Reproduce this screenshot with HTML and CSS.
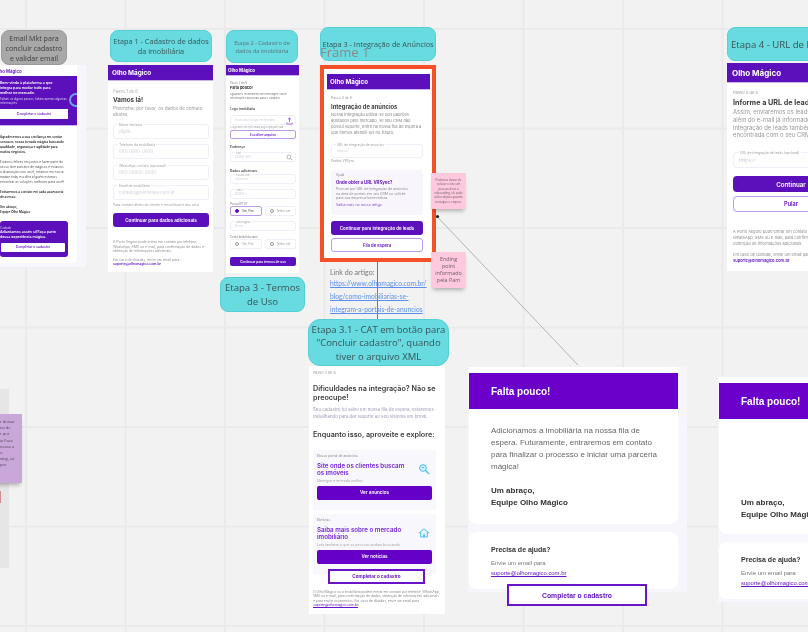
FILE: index.html
```html
<!DOCTYPE html>
<html lang="pt-BR">
<head>
<meta charset="utf-8">
<title>Fluxo de cadastro</title>
<link rel="stylesheet" href="styles.css">
</head>
<body>
<main class="board">

<div class="sliver"></div>
<div class="sliver-red"></div>
<div class="note note-lilac">r deixar<br>na de<br>r por<br>ia Fase<br>nesse a<br>o<br>ving, só<br>por</div>

<svg class="wires" width="808" height="632" viewBox="0 0 808 632">
  <path d="M437.5 217 L578 365" stroke="#b4b4b4" stroke-width="1" fill="none"/>
  <path d="M377.5 259 V320" stroke="#7a7a7a" stroke-width="1" fill="none"/>
  <circle cx="437.5" cy="216.5" r="1.6" fill="#222"/>
  <circle cx="377.5" cy="259" r="1.6" fill="#222"/>
</svg>

<div class="tag tag-gray t-mkt">Email Mkt para<br>concluir cadastro<br>e validar email</div>
<div class="tag t-e1">Etapa 1 - Cadastro de dados<br>da imobiliária</div>
<div class="tag t-e2">Etapa 2 - Cadastro de<br>dados da imobiliária</div>
<div class="tag t-e3">Etapa 3 - Integração de Anúncios</div>
<div class="tag t-terms">Etapa 3 - Termos<br>de Uso</div>
<div class="tag t-e31">Etapa 3.1 - CAT em botão para<br>"Concluir cadastro", quando<br>tiver o arquivo XML</div>
<div class="tag t-e4">Etapa 4 - URL de leads</div>
<div class="frame-name">Frame 1</div>

<!-- E-mail marketing -->
<section class="s-mail">
  <div class="mail-inner">
    <div class="mail-logo">Olho Mágico</div>
    <div class="mail-hero">
      <b>Bem-vindo à plataforma a que<br>integra para mudar tudo para<br>melhor no mercado.</b>
      <span>Faltam só alguns passos, faltam apenas algumas<br>informações.</span>
      <div class="mail-btn">Completar o cadastro</div>
      <i class="ring"></i>
    </div>
    <div class="mail-body">
      <p><b>Agradecemos a sua confiança em contar<br>conosco; nossa jornada mágica buscando<br>qualidade, segurança e agilidade para<br>muitos negócios.</b></p>
      <p>Estamos felizes em juntos e fazer parte do<br>nosso time parceiro de mágicos e estamos<br>a disposição com você, estamos em nossa<br>equipe toda, escolha a lguém estamos<br>encontrar as soluções melhores para você!</p>
      <p><b>Entraremos a contato em cada assessoria<br>de acesso.</b></p>
      <p class="mail-sign"><b>Um abraço,<br>Equipe Olho Mágico</b></p>
    </div>
    <div class="mail-card">
      <span>Cuidado</span>
      <b>Adiantamos assim sil Faça parte<br>dessa experiência mágica.</b>
      <div class="mail-btn">Completar o cadastro</div>
    </div>
  </div>
</section>

<!-- Etapa 1 -->
<section class="screen s1">
  <header class="bar bar-1">Olho Mágico</header>
  <div class="pad-1">
    <div class="step">Passo 1 de 6</div>
    <h2 class="h-1">Vamos lá!</h2>
    <p class="lead-1">Preencha, por favor, os dados de contato<br>abaixo.</p>
    <div class="field f-1"><label>Nome fantasia</label><span>digite</span></div>
    <div class="field f-1"><label>Telefone da imobiliária</label><span>(00) 0000-0000</span></div>
    <div class="field f-1"><label>WhatsApp contato (opcional)</label><span>(00) 00000-0000</span></div>
    <div class="field f-1"><label>Email da imobiliária</label><span>contato@minhasua.com.br</span></div>
    <div class="hint-1">Para contato direto do cliente e envio/inserir dos seus</div>
    <div class="btn btn-1">Continuar para dados adicionais</div>
    <p class="legal-1">A Porto Seguro pode entrar em contato por telefone,<br>WhatsApp, SMS ou e-mail, para confirmação de dados e<br>obtenção de informações adicionais.</p>
    <p class="legal-1 gap-1">Em caso de dúvidas, envie um email para<br><a>suporte@olhomagico.com.br</a></p>
  </div>
</section>

<!-- Etapa 2 -->
<section class="screen s2">
  <header class="bar bar-2">Olho Mágico</header>
  <div class="pad-2">
    <div class="step step-2">Passo 2 de 6</div>
    <h3 class="h-2">Falta pouco!</h3>
    <p class="lead-2">Aguarde o recebimento de mensagem sobre<br>informações adicionais para o cadastro.</p>
    <div class="sec-2">Logo imobiliária</div>
    <div class="field f-2 f-upload"><span>Insira aqui a logo em formato</span>
      <svg class="ico-up" width="7" height="8" viewBox="0 0 7 8"><path d="M3.5 5V1M2 2.4 3.5 1 5 2.4M.8 5.5v1.5h5.4V5.5" stroke="#8a4fe0" stroke-width=".8" fill="none"/></svg>
    </div>
    <div class="hint-2">A logo deve ser em formato png ou jpeg até 5Mb</div>
    <div class="btn-o o-2">Escolher arquivo</div>
    <div class="sec-2 s2-addr">Endereço</div>
    <div class="field f-2 f-cep"><label>CEP</label><span>00000-000</span>
      <svg class="ico-up" width="7" height="7" viewBox="0 0 7 7"><circle cx="3" cy="3" r="2" stroke="#999" stroke-width=".7" fill="none"/><path d="M4.5 4.5 6.3 6.3" stroke="#999" stroke-width=".7"/></svg>
    </div>
    <div class="sec-2 s2-data">Dados adicionais</div>
    <div class="field f-2 f-sel"><label>Possui site?</label><span>Selecione</span></div>
    <div class="field f-2 f-cre"><label>Creci</label><span>00000-J</span></div>
    <div class="mini-2">Possui IPTU?</div>
    <div class="radios">
      <div class="radio on"><i></i>Sim, Pim</div>
      <div class="radio"><i></i>Tenho site</div>
    </div>
    <div class="field f-2 f-cre"><label>Site/Página</label><span>Nome</span></div>
    <div class="mini-2 m-gap">Conta bola/fiduciário</div>
    <div class="radios">
      <div class="radio"><i></i>Sim, Pim</div>
      <div class="radio"><i></i>Tenho site</div>
    </div>
    <div class="btn btn-2">Continuar para termos de uso</div>
  </div>
</section>

<!-- Etapa 3 -->
<section class="s3">
  <header class="bar bar-3">Olho Mágico</header>
  <div class="pad-3">
    <div class="step">Passo 4 de 6</div>
    <h3 class="h-3">Integração de anúncios</h3>
    <p class="lead-3">Nossa integração utiliza-se dos padrões<br>adotados pelo mercado, se seu CRM não<br>possui suporte, entre na nossa fila de espera a<br>que iremos atendê-los no futuro.</p>
    <div class="field f-3"><label>URL de integração de anúncios</label><span>https://</span></div>
    <div class="hint-3">Padrão VRSync</div>
    <div class="info">
      <small>Ajuda</small>
      <b>Onde obter a URL VRSync?</b>
      <p>Procure por URL de integração de anúncios<br>na área de portais em seu CRM ou solicite<br>para sua empresa fornecedora.</p>
      <a>Saiba mais no nosso artigo</a>
    </div>
    <div class="btn btn-3">Continuar para integração de leads</div>
    <div class="btn-o o-3">Fila de espera</div>
  </div>
</section>

<div class="note note-pink n1">Podemos deixar de colocar o site sim<br>para acelerar o onboarding, ele pode voltar depois quando consegue o arquivo.</div>
<div class="note note-pink n2">Ending point informado pela Pam</div>

<div class="article">
  <p>Link do artigo:</p>
  <a>https://www.olhomagico.com.br/<br>blog/como-imobiliarias-se-<br>integram-a-portais-de-anuncios</a>
</div>

<!-- Etapa 3.1 -->
<section class="s31">
  <div class="step">Passo 4 de 6</div>
  <h3 class="h-31 m1">Dificuldades na integração? Não se preocupe!</h3>
  <p class="lead-31">Seu cadastro foi salvo em nossa fila de espera, estaremos trabalhando para dar suporte ao seu sistema em breve.</p>
  <h3 class="h-31 m2">Enquanto isso, aproveite e explore:</h3>
  <div class="promo">
    <small>Nosso portal de anúncios</small>
    <div class="promo-row">
      <strong>Site onde os clientes buscam os imóveis</strong>
      <svg width="12" height="12" viewBox="0 0 12 12"><circle cx="5" cy="5" r="3.4" fill="#cdefff" stroke="#55bdf0" stroke-width="1"/><path d="M7.6 7.6 11 11" stroke="#55bdf0" stroke-width="1.4"/><path d="M5 3.4 6.6 5H3.4Z" fill="#55bdf0"/></svg>
    </div>
    <small class="sub">Navegue e entenda melhor</small>
    <div class="btn btn-31">Ver anúncios</div>
  </div>
  <div class="promo">
    <small>Notícias</small>
    <div class="promo-row">
      <strong>Saiba mais sobre o mercado imobiliário</strong>
      <svg width="12" height="12" viewBox="0 0 12 12"><path d="M1 6 6 1.8 11 6M2.6 5.2V10h6.8V5.2" fill="#dff4ff" stroke="#55bdf0" stroke-width="1"/><path d="M5 10V7.5h2V10" fill="#55bdf0"/></svg>
    </div>
    <small class="sub">Leia também o que as pessoas andam buscando</small>
    <div class="btn btn-31">Ver notícias</div>
  </div>
  <p class="legal-31">O Olho Mágico ou a imobiliária podem entrar em contato por telefone, WhatsApp, SMS ou e-mail, para confirmação de dados, obtenção de informações adicionais e para enviar orçamentos. Em caso de dúvidas, envie um email para <a>suporte@olhomagico.com.br</a>.</p>
</section>
<div class="cta cta-31">Completar o cadastro</div>

<!-- Falta pouco -->
<section class="wait w1">
  <div class="wait-card">
    <header class="wait-head">Falta pouco!</header>
    <p class="wait-text">Adicionamos a imobiliária na nossa fila de espera. Futuramente, entraremos em contato para finalizar o processo e iniciar uma parceria mágica!</p>
    <p class="wait-sign">Um abraço,<br>Equipe Olho Mágico</p>
  </div>
  <div class="help">
    <b>Precisa de ajuda?</b>
    <span>Envie um email para</span>
    <a>suporte@olhomagico.com.br</a>
  </div>
</section>
<div class="cta cta-w">Completar o cadastro</div>

<section class="wait w2">
  <div class="wait-card">
    <header class="wait-head">Falta pouco!</header>
    <p class="wait-text ghost">&nbsp;</p>
    <p class="wait-sign">Um abraço,<br>Equipe Olho Mágico</p>
  </div>
  <div class="help">
    <b>Precisa de ajuda?</b>
    <span>Envie um email para</span>
    <a>suporte@olhomagico.com.br</a>
  </div>
</section>

<!-- Etapa 4 -->
<section class="screen s4">
  <header class="bar bar-4">Olho Mágico</header>
  <div class="pad-4">
    <div class="step">Passo 5 de 6</div>
    <h3 class="h-4">Informe a URL de leads</h3>
    <p class="lead-4">Assim, enviaremos os leads para o seu CRM<br>além do e-mail já informado. Caso a<br>integração de leads também não seja<br>encontrada com o seu CRM.</p>
    <div class="field f-4"><label>URL de integração de leads (opcional)</label><span>https://</span></div>
    <div class="btn btn-4">Continuar</div>
    <div class="btn-o o-4">Pular</div>
    <p class="legal-4">A Porto Seguro pode entrar em contato por telefone,<br>WhatsApp, SMS ou e-mail, para confirmação de dados,<br>obtenção de informações adicionais.</p>
    <p class="legal-4 gap-4">Em caso de dúvidas, envie um email para<br><a>suporte@olhomagico.com.br</a></p>
  </div>
</section>

</main>
</body>
</html>
```

FILE: styles.css
```css
* { box-sizing: border-box; }
html, body { margin: 0; padding: 0; }
body { overflow: hidden; }
p, h2, h3 { margin: 0; font-weight: inherit; }

.board {
  position: relative;
  width: 808px;
  height: 632px;
  overflow: hidden;
  background-color: #f2f2f2;
  background-image:
    linear-gradient(90deg, #eaeaea 2px, transparent 2px),
    linear-gradient(#eaeaea 2px, transparent 2px);
  background-size: 99.5px 99.5px;
  background-position: 25px 28px;
  font-family: "Inter", "Liberation Sans", sans-serif;
  color: #444;
}

.wires { position: absolute; left: 0; top: 0; }

/* Labels on the canvas */
.tag {
  position: absolute;
  display: flex;
  align-items: center;
  justify-content: center;
  text-align: center;
  background: #68dbe0;
  border: 1px solid #53cfd6;
  border-radius: 8px;
  font-family: "Open Sans", "Liberation Sans", sans-serif;
  color: #37545a;
  white-space: nowrap;
  filter: blur(.3px);
}
.tag-gray { background: #a8a8a8; border-color: #9a9a9a; color: #3c3c3c; }
.t-mkt { left: 1px; top: 30px; width: 66px; height: 35px; font-size: 7.1px; line-height: 10px; }
.t-e1 { left: 110px; top: 30px; width: 102px; height: 32px; font-size: 7.3px; line-height: 10px; }
.t-e2 { left: 226px; top: 30px; width: 72px; height: 33px; font-size: 5.6px; line-height: 8px; color: #5a7479; }
.t-e3 { left: 320px; top: 27px; width: 116px; height: 34px; font-size: 7.3px; padding-bottom: 1px; }
.t-terms { left: 220px; top: 277px; width: 85px; height: 35px; font-size: 9.6px; line-height: 13.5px; }
.t-e31 { left: 308px; top: 319px; width: 141px; height: 47px; padding-top: 1px; font-size: 9.5px; line-height: 13.4px; border-radius: 12px; }
.t-e4 { left: 727px; top: 27px; width: 130px; height: 34px; font-size: 9.6px; justify-content: flex-start; padding-left: 3px; }
.frame-name {
  position: absolute;
  left: 320px;
  top: 44px;
  font-family: "Open Sans", "Liberation Sans", sans-serif;
  font-size: 13px;
  line-height: 17px;
  color: #8a8a8a;
  filter: blur(.3px);
}

/* Shared bits of the phone screens */
.screen, .s3, .s31, .s-mail, .wait { filter: blur(.4px); }
.screen { position: absolute; background: #fff; overflow: hidden; }
.bar {
  display: flex;
  align-items: center;
  background: #5c10bc;
  border-bottom: 1px solid #c9b4ee;
  color: #fff;
  font-weight: 700;
}
.step { color: #a8a8a8; font-size: 4.2px; line-height: 5px; }
.field {
  position: relative;
  display: flex;
  align-items: center;
  background: #fff;
  border: 1px solid #f0eef6;
  border-radius: 3px;
  color: #cfcfd8;
}
.field label {
  position: absolute;
  left: 4px;
  top: -3px;
  padding: 0 1px;
  background: #fff;
  color: #a0a0a0;
  white-space: nowrap;
}
.btn {
  display: flex;
  align-items: center;
  justify-content: center;
  color: #fff;
  font-weight: 600;
  background: #5c10bc;
  white-space: nowrap;
}
.btn-o {
  display: flex;
  align-items: center;
  justify-content: center;
  background: #fff;
  border: 1px solid #b99be8;
  color: #6316c4;
  font-weight: 600;
}

/* E-mail marketing */
.s-mail {
  position: absolute;
  left: -12px;
  top: 65px;
  width: 98px;
  height: 202px;
  background: #f7f6fc;
}
.mail-inner {
  width: 89px;
  height: 198px;
  background: #fff;
  border-radius: 0 0 4px 0;
  padding-top: 4px;
}
.mail-logo { padding-left: 7px; font-size: 4.4px; font-weight: 600; line-height: 6px; color: #6018bf; }
.mail-hero {
  position: relative;
  height: 50px;
  margin-top: 1px;
  padding: 5px 0 0 12px;
  background: #5c10bc;
  color: #fff;
  overflow: hidden;
  border-bottom: 1px solid #c9b4ee;
}
.mail-hero b { display: block; font-size: 3.6px; line-height: 5.1px; font-weight: 600; }
.mail-hero span { display: block; font-size: 2.9px; line-height: 4px; margin-top: 1px; color: #ddd0f4; }
.ring {
  position: absolute;
  right: -6px;
  top: 17px;
  width: 14px;
  height: 14px;
  border: 2px solid #6ea0f0;
  border-radius: 50%;
}
.mail-btn {
  display: flex;
  align-items: center;
  justify-content: center;
  background: #fff;
  color: #6b1cc8;
  font-size: 3.3px;
  font-weight: 600;
}
.mail-hero .mail-btn { width: 68px; height: 9.5px; margin-top: 4px; }
.mail-body { padding: 9px 0 0 12px; font-size: 3.15px; line-height: 5px; color: #555; }
.mail-body p { margin-bottom: 5px; white-space: nowrap; }
.mail-body b { color: #222; font-weight: 600; }
.mail-card {
  margin: 6px 9px 0 12px;
  height: 36px;
  padding: 5px 0 0 0;
  background: #5c10bc;
  border-radius: 3px;
  color: #fff;
  font-size: 3.6px;
  line-height: 5.2px;
}
.mail-card span { display: block; font-size: 2.8px; line-height: 4px; color: #ddd0f4; }
.mail-card b { display: block; white-space: nowrap; font-weight: 600; }
.mail-card .mail-btn { width: 64px; height: 9px; margin: 3px 0 0 1px; border-radius: 1px; }

/* Etapa 1 */
.s1 { left: 108px; top: 65px; width: 105px; height: 207px; }
.bar-1 { height: 16px; padding-left: 4px; font-size: 6.4px; }
.pad-1 { padding: 8px 4px 0 5px; }
.h-1 { margin-top: 2px; font-size: 6.3px; line-height: 8px; font-weight: 700; color: #3f3f3f; }
.lead-1 { margin: 2px 0 5px; font-size: 4.6px; line-height: 6.3px; color: #9a9a9a; }
.f-1 { height: 15px; margin-bottom: 5.5px; padding-left: 5px; font-size: 4.4px; }
.f-1 label { font-size: 3.4px; line-height: 4px; top: -2px; }
.hint-1 { margin-top: -2.5px; font-size: 3.4px; line-height: 4px; color: #9a9a9a; white-space: nowrap; }
.btn-1 { height: 14px; margin-top: 6px; border-radius: 3px; font-size: 4.6px; }
.legal-1 { margin-top: 13px; font-size: 3.4px; line-height: 4.6px; color: #8d8d8d; white-space: nowrap; }
.legal-1 a, .legal-4 a { color: #6316c4; font-weight: 600; text-decoration: none; }
.gap-1 { margin-top: 4px; }

/* Etapa 2 */
.s2 { left: 226px; top: 65px; width: 73px; height: 208px; }
.bar-2 { height: 11px; padding-left: 2px; font-size: 4.4px; }
.pad-2 { padding: 5px 3px 0 4px; }
.step-2 { font-size: 2.8px; line-height: 4px; color: #8a8a8a; }
.h-2 { font-size: 3.8px; line-height: 5px; font-weight: 700; color: #333; }
.lead-2 { margin-top: 2px; font-size: 2.7px; line-height: 4px; color: #777; white-space: nowrap; }
.sec-2 { margin-top: 7px; font-size: 3.3px; line-height: 4px; font-weight: 600; color: #444; white-space: nowrap; }
.f-2 { height: 10px; padding-left: 4px; font-size: 2.9px; }
.f-2 label { font-size: 2.6px; line-height: 3px; top: -1.5px; }
.ico-up { position: absolute; right: 2px; top: 1px; }
.f-upload { margin-top: 4px; }
.hint-2 { margin-top: 1px; font-size: 2.3px; line-height: 3px; color: #999; white-space: nowrap; }
.o-2 { height: 9px; margin-top: 1px; border-radius: 2px; font-size: 3.2px; }
.s2-addr { margin-top: 6px; }
.f-cep { margin-top: 3px; }
.s2-data { margin-top: 7px; }
.f-sel { margin-top: 1px; height: 10px; }
.f-cre { margin-top: 5px; height: 10px; }
.mini-2 { margin-top: 3px; font-size: 2.8px; line-height: 4px; color: #777; }
.m-gap { margin-top: 4px; }
.radios { display: flex; gap: 3px; }
.radio {
  flex: 1;
  display: flex;
  align-items: center;
  gap: 3px;
  height: 10px;
  padding-left: 4px;
  border: 1px solid #f0eef6;
  border-radius: 2px;
  font-size: 2.8px;
  color: #999;
}
.radio i { width: 4px; height: 4px; border: .5px solid #999; border-radius: 50%; }
.radio.on { border-color: #b99be8; color: #444; }
.radio.on i { background: #5c10bc; border-color: #5c10bc; }
.btn-2 { height: 9px; margin-top: 8px; border-radius: 2px; font-size: 3.2px; }

/* Etapa 3 */
.s3 {
  position: absolute;
  left: 320px;
  top: 65px;
  width: 116px;
  height: 197px;
  background: #fff;
  border: 4px solid #f4502a;
  padding-top: 5px;
}
.bar-3 { height: 16px; margin-left: 3px; margin-right: 2px; padding-left: 3px; font-size: 6.2px; }
.pad-3 { padding: 6px 9px 0 7px; }
.pad-3 .step { font-size: 3.4px; line-height: 4px; color: #999; }
.h-3 { margin-top: 3px; font-size: 5.8px; line-height: 7px; font-weight: 700; color: #444; }
.lead-3 { margin-top: 2px; font-size: 4.1px; line-height: 6px; color: #888; white-space: nowrap; }
.f-3 { height: 14px; margin-top: 8px; padding-left: 5px; font-size: 3.4px; }
.f-3 label { font-size: 3.2px; line-height: 4px; top: -2px; }
.hint-3 { margin-top: 1px; font-size: 3.2px; line-height: 4px; color: #999; }
.info {
  height: 45px;
  margin-top: 7px;
  padding: 3px 5px;
  background: #f8f6fc;
  border-radius: 3px;
}
.info small { display: block; font-size: 3.1px; line-height: 4px; color: #888; }
.info b { display: block; margin-top: 3px; font-size: 4.3px; line-height: 5px; color: #5c10bc; }
.info p { margin-top: 2px; font-size: 3.5px; line-height: 4.6px; color: #888; white-space: nowrap; }
.info a { display: block; margin-top: 2px; font-size: 3.6px; line-height: 5px; color: #7a4cc4; }
.btn-3 { height: 14px; margin-top: 6px; border-radius: 3px; font-size: 4.4px; }
.o-3 { height: 14px; margin-top: 3px; border-radius: 3px; font-size: 4.2px; }

.note {
  position: absolute;
  display: flex;
  align-items: center;
  justify-content: center;
  text-align: center;
  font-family: "Open Sans", "Liberation Sans", sans-serif;
  color: #6b5a62;
  box-shadow: 0 4px 4px -2px rgba(0, 0, 0, .28);
  filter: blur(.25px);
}
.note-pink { background: #ffc9dd; }
.n1 { left: 431px; top: 173px; width: 35px; height: 36px; font-size: 2.9px; line-height: 4.4px; padding: 1px 2px; }
.n2 { left: 431px; top: 252px; width: 35px; height: 36px; font-size: 5.4px; line-height: 7.2px; padding: 0 3px; }
.note-lilac {
  display: block;
  left: -22px;
  top: 414px;
  width: 44px;
  height: 69px;
  padding: 5px 0 0 22px;
  background: #c9a7d9;
  text-align: left;
  font-size: 4.1px;
  line-height: 6.2px;
  color: #54405c;
}
.sliver { position: absolute; left: 0; top: 389px; width: 9px; height: 179px; background: #e6e6e6; }
.sliver-red { position: absolute; left: 0; top: 491px; width: 1px; height: 12px; background: #d08c8c; }

.article {
  position: absolute;
  left: 330px;
  top: 266px;
  font-family: "Lato", "Liberation Sans", sans-serif;
  font-size: 7.1px;
  line-height: 13px;
  color: #777;
  filter: blur(.25px);
  white-space: nowrap;
}
.article p { margin-bottom: -2px; }
.article a { font-size: 6.7px; color: #5c8fec; text-decoration: underline; }

/* Etapa 3.1 */
.s31 {
  position: absolute;
  left: 309px;
  top: 366px;
  width: 136px;
  height: 248px;
  padding: 4px 4px 0 4px;
  background: #fff;
}
.s31 .step { font-size: 3.7px; color: #a0a0a0; }
.h-31 { font-size: 7.2px; line-height: 9px; font-weight: 600; color: #3a3a3a; }
.m1 { margin-top: 9px; }
.m2 { margin-top: 10px; }
.lead-31 { margin-top: 5px; font-size: 4.4px; line-height: 6.5px; color: #9d98b5; }
.promo {
  margin: 11px 5px 0 0;
  height: 60px;
  padding: 4px 4px 0 4px;
  background: #f8f7fc;
  border-radius: 2px;
}
.promo + .promo { margin-top: 4px; }
.promo small { display: block; font-size: 3.4px; line-height: 5px; color: #888; }
.promo-row { display: flex; align-items: center; justify-content: space-between; margin-top: 3px; }
.promo-row strong { width: 92px; font-size: 6.2px; line-height: 7.4px; font-weight: 600; color: #7527d8; }
.promo-row svg { margin-right: 2px; flex: none; }
.promo .sub { margin-top: 2px; font-size: 3.6px; color: #a5a5a5; }
.btn-31 { height: 14px; margin-top: 2px; border-radius: 2px; background: #6400c8; font-size: 4.6px; }
.legal-31 { margin-top: 16px; font-size: 3.3px; line-height: 4.3px; color: #8a8a8a; }
.legal-31 a { color: #6316c4; text-decoration: underline; }

.cta {
  position: absolute;
  display: flex;
  align-items: center;
  justify-content: center;
  background: #fff;
  border: 2px solid #6a14c8;
  color: #5c10bc;
  font-family: "Liberation Sans", sans-serif;
  font-weight: 700;
  filter: blur(.3px);
}
.cta-31 { left: 328px; top: 569px; width: 97px; height: 15px; font-size: 4.6px; font-family: "Inter", sans-serif; }
.cta-w { left: 507px; top: 584px; width: 140px; height: 22px; font-size: 6.8px; }

/* Falta pouco */
.wait {
  position: absolute;
  background: #f7f6fc;
  font-family: "Liberation Sans", Arial, sans-serif;
}
.w1 { left: 468px; top: 367px; width: 219px; height: 225px; }
.w2 { left: 718px; top: 377px; width: 100px; height: 225px; white-space: nowrap; }
.wait-card {
  height: 157px;
  width: 209px;
  margin-left: 1px;
  padding-top: 6px;
  background: #fff;
  border-radius: 0 0 8px 8px;
}
.wait-head {
  display: flex;
  align-items: center;
  height: 36px;
  padding-left: 22px;
  background: #6a00c9;
  color: #fff;
  font-size: 10px;
  font-weight: 700;
}
.wait-text { padding: 16px 18px 0 22px; font-size: 8px; line-height: 12px; color: #666; }
.wait-text.ghost { height: 66px; }
.wait-sign { margin-top: 12px; padding-left: 22px; font-size: 8px; line-height: 12px; font-weight: 700; color: #333; }
.help {
  display: flex;
  flex-direction: column;
  height: 57px;
  width: 209px;
  margin: 8px 0 0 1px;
  padding: 14px 0 0 22px;
  background: #fff;
  border-radius: 8px;
}
.help b { font-size: 7px; line-height: 8px; color: #333; }
.help span { margin-top: 5px; font-size: 6px; line-height: 8px; color: #777; }
.help a { margin-top: 2px; font-size: 5.9px; line-height: 8px; color: #6316c4; text-decoration: underline; }

/* Etapa 4 */
.s4 { left: 727px; top: 63px; width: 130px; height: 208px; }
.bar-4 { height: 20px; padding-left: 5px; font-size: 8px; }
.pad-4 { padding: 7px 8px 0 6px; }
.pad-4 .step { font-size: 4.1px; line-height: 6px; color: #999; }
.h-4 { margin-top: 2px; font-size: 7.2px; line-height: 9px; font-weight: 700; color: #3d3d3d; white-space: nowrap; }
.lead-4 { margin-top: 1px; font-size: 5.9px; line-height: 7.8px; color: #999; white-space: nowrap; }
.f-4 { height: 16px; margin-top: 13px; padding-left: 5px; font-size: 5px; }
.f-4 label { font-size: 3.3px; line-height: 4px; top: -2px; left: 5px; }
.btn-4 { height: 16px; margin-top: 8px; border-radius: 4px; font-size: 6.2px; }
.o-4 { height: 16px; margin-top: 4px; border-radius: 4px; font-size: 5.6px; }
.legal-4 { margin-top: 17px; font-size: 4px; line-height: 6px; color: #8d8d8d; white-space: nowrap; }
.gap-4 { margin-top: 5px; }
```
